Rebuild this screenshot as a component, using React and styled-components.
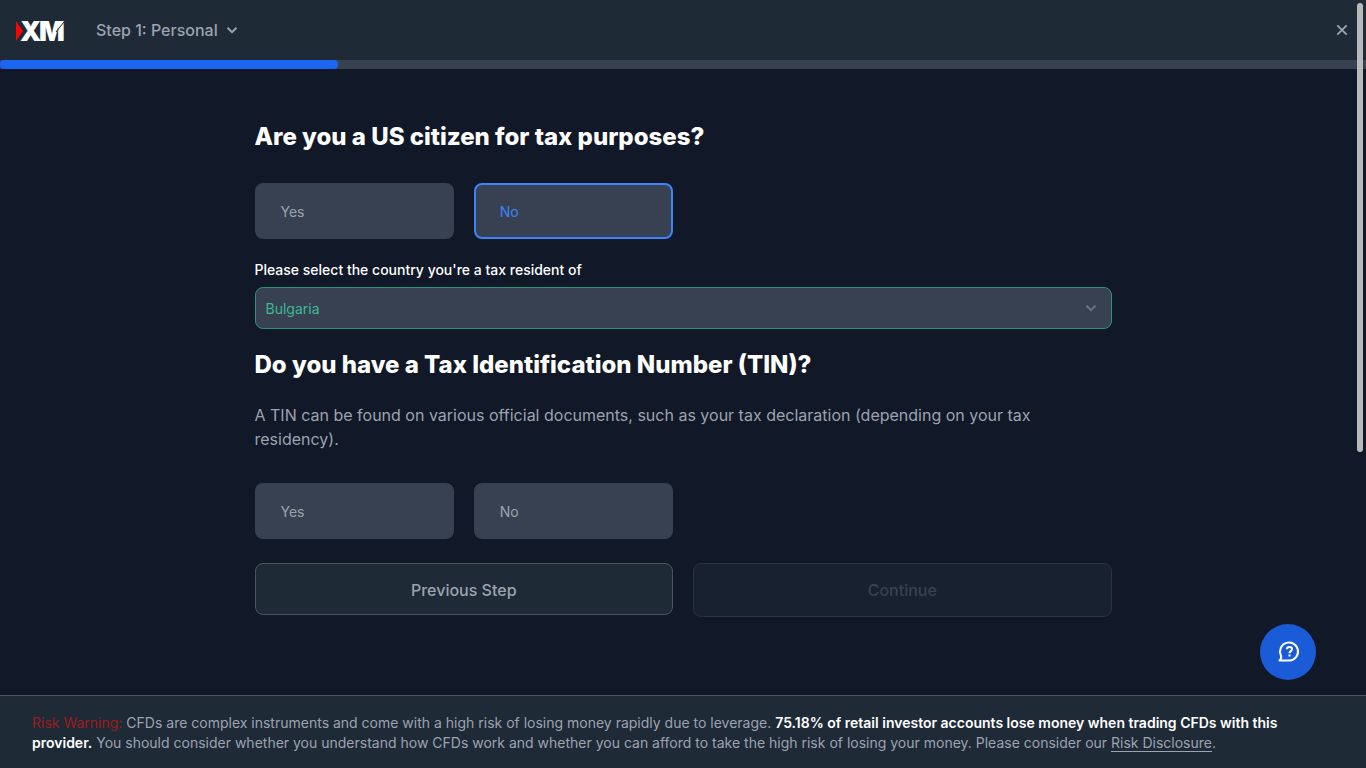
import { useState } from 'react';
import styled, { createGlobalStyle } from 'styled-components';

const GlobalStyle = createGlobalStyle`
  *,
  *::before,
  *::after {
    box-sizing: border-box;
  }

  body {
    margin: 0;
    background: #111827;
    color: #9ca3af;
    font-family: Inter, 'Liberation Sans', sans-serif;
    font-size: 16px;
    line-height: 24px;
  }

  button,
  select {
    font-family: inherit;
  }
`;

const Page = styled.div`
  display: flex;
  flex-direction: column;
  min-height: 100vh;
`;

const Header = styled.header`
  display: flex;
  align-items: center;
  gap: 32px;
  height: 60px;
  padding: 0 16px;
  background: #1f2a37;
`;

const LogoLink = styled.a`
  display: flex;
`;

const LogoSvg = styled.svg`
  display: block;
  overflow: visible;
`;

const LogoText = styled.text`
  fill: #fff;
  font-family: Inter, 'Liberation Sans', sans-serif;
  font-size: 27px;
  font-weight: 900;
`;

const StepButton = styled.button`
  display: flex;
  align-items: center;
  gap: 8px;
  padding: 0;
  border: 0;
  background: none;
  color: #9ca3af;
  font-size: 16px;
  font-weight: 500;
  line-height: 24px;
  cursor: pointer;
`;

const CloseButton = styled.button`
  display: flex;
  margin-left: auto;
  padding: 2px;
  border: 0;
  background: none;
  color: #9ca3af;
  cursor: pointer;
`;

const ProgressTrack = styled.div`
  height: 9px;
  padding-right: 14px;
  background: #374151;
`;

const ProgressBar = styled.div`
  height: 100%;
  border-radius: 4px;
  background: #1c64f2;
`;

const Main = styled.main`
  flex: 1;
  width: 100%;
  max-width: 889px;
  margin: 0 auto;
  padding: 52px 16px 32px;
`;

const Title = styled.h2`
  margin: 0;
  color: #fff;
  font-size: 24px;
  font-weight: 800;
  line-height: 32px;
`;

const Hint = styled.p`
  margin: 22px 0 0;
`;

const Options = styled.div`
  display: grid;
  grid-template-columns: repeat(4, 1fr);
  gap: 20px;
  margin-top: ${({ $top }) => $top}px;
`;

const HiddenRadio = styled.input`
  position: absolute;
  opacity: 0;
`;

const Option = styled.label`
  display: flex;
  align-items: center;
  height: 56px;
  padding: 2px 24px 0;
  border: 2px solid ${({ $checked }) => ($checked ? '#3f83f8' : '#374151')};
  border-radius: 8px;
  background: #374151;
  color: ${({ $checked }) => ($checked ? '#3f83f8' : '#9ca3af')};
  font-size: 14px;
  line-height: 20px;
  cursor: pointer;
`;

const FieldLabel = styled.label`
  display: block;
  margin: 21px 0 7px;
  color: #fff;
  font-size: 14px;
  font-weight: 500;
  line-height: 20px;
`;

const SelectBox = styled.div`
  position: relative;
  margin-bottom: 20px;
`;

const Select = styled.select`
  display: block;
  width: 100%;
  height: 42px;
  padding: 2px 40px 0 10px;
  border: 1px solid #2a9477;
  border-radius: 8px;
  background: #374151;
  color: #3cba92;
  font-size: 14px;
  line-height: 20px;
  appearance: none;
`;

const SelectArrow = styled.span`
  position: absolute;
  top: 0;
  right: 15px;
  display: flex;
  align-items: center;
  height: 100%;
  color: #6b7280;
  pointer-events: none;
`;

const Actions = styled.div`
  display: grid;
  grid-template-columns: 1fr 1fr;
  align-items: start;
  gap: 20px;
  margin-top: 24px;
`;

const ActionButton = styled.button`
  height: ${({ $height }) => $height}px;
  padding: ${({ $height }) => ($height === 52 ? '2px 20px 0' : '0 20px')};
  border: 1px solid #4b5563;
  border-radius: 8px;
  background: #1f2a37;
  color: #9ca3af;
  font-size: 16px;
  font-weight: 500;
  line-height: 24px;
  cursor: pointer;

  &:disabled {
    border-color: #29333f;
    background: #18212f;
    color: #374151;
    cursor: not-allowed;
  }
`;

const Footer = styled.footer`
  padding: 17px 32px 15px;
  border-top: 1px solid #4b5563;
  background: #1f2a37;
  font-size: 14px;
  line-height: 20px;
`;

const FooterText = styled.p`
  margin: 0;
`;

const Warning = styled.span`
  color: #9b1c1c;
`;

const Strong = styled.strong`
  color: #fff;
  font-weight: 600;
`;

const FooterLink = styled.a`
  color: inherit;
  text-decoration: none;
  border-bottom: 1px solid #9ca3af;
`;

const HelpButton = styled.button`
  position: fixed;
  right: 50px;
  bottom: 88px;
  display: flex;
  align-items: center;
  justify-content: center;
  width: 56px;
  height: 56px;
  padding: 0;
  border: 0;
  border-radius: 50%;
  background: #1a5cd8;
  color: #fff;
  cursor: pointer;
`;

const ScrollThumb = styled.div`
  position: fixed;
  top: 3px;
  right: 3px;
  width: 6px;
  height: 449px;
  border-radius: 3px;
  background: #b9b9b9;
`;

function Logo() {
  return (
    <LogoSvg width="48" height="22" viewBox="0 0 48 22" role="img" aria-label="XM">
      <LogoText x="4" y="22">X</LogoText>
      <LogoText x="23" y="22">M</LogoText>
      <path d="M0 2L7 12L0 22Z" fill="#f00" />
      <path d="M48 3L40 13" stroke="#1f2a37" strokeWidth="1" fill="none" />
    </LogoSvg>
  );
}

function Chevron() {
  return (
    <svg width="12" height="12" viewBox="0 0 12 12" fill="none" aria-hidden="true">
      <path d="M1.5 3.8L6 8.2L10.5 3.8" stroke="currentColor" strokeWidth="2" />
    </svg>
  );
}

function CloseIcon() {
  return (
    <svg width="12" height="12" viewBox="0 0 12 12" fill="none" aria-hidden="true">
      <path d="M1.3 1.3L10.7 10.7M10.7 1.3L1.3 10.7" stroke="currentColor" strokeWidth="1.8" />
    </svg>
  );
}

function HelpIcon() {
  return (
    <svg width="24" height="24" viewBox="-1 0 24 24" fill="none" stroke="currentColor" strokeWidth="2" aria-hidden="true">
      <path d="M2.5 20.5C4.6 18.4 4.5 16.8 3.8 15.2A9 9 0 1 1 12.5 20.5Z" strokeLinejoin="round" />
      <path d="M10 9.3C10 7.9 11.1 7.1 12.5 7.1C13.9 7.1 15 8 15 9.3C15 11.2 12.5 11.1 12.5 13.2M12.5 14.6V16.6" />
    </svg>
  );
}

function YesNo({ name, label, value, onChange, top }) {
  return (
    <Options role="radiogroup" aria-label={label} $top={top}>
      {['Yes', 'No'].map((option) => (
        <Option key={option} $checked={value === option}>
          <HiddenRadio
            type="radio"
            name={name}
            value={option}
            checked={value === option}
            onChange={() => onChange(option)}
          />
          {option}
        </Option>
      ))}
    </Options>
  );
}

export default function App() {
  const [citizen, setCitizen] = useState('No');
  const [hasTin, setHasTin] = useState('');
  const progress = 25;

  return (
    <>
      <GlobalStyle />
      <Page>
        <Header>
          <LogoLink href="#">
            <Logo />
          </LogoLink>
          <StepButton type="button">
            Step 1: Personal
            <Chevron />
          </StepButton>
          <CloseButton type="button" aria-label="Close">
            <CloseIcon />
          </CloseButton>
        </Header>
        <ProgressTrack>
          <ProgressBar role="progressbar" aria-valuenow={progress} style={{ width: `${progress}%` }} />
        </ProgressTrack>

        <Main>
          <Title>Are you a US citizen for tax purposes?</Title>
          <YesNo name="citizen" label="US citizen" value={citizen} onChange={setCitizen} top={30} />

          <FieldLabel htmlFor="country">Please select the country you're a tax resident of</FieldLabel>
          <SelectBox>
            <Select id="country" defaultValue="Bulgaria">
              <option>Bulgaria</option>
            </Select>
            <SelectArrow>
              <Chevron />
            </SelectArrow>
          </SelectBox>

          <Title>Do you have a Tax Identification Number (TIN)?</Title>
          <Hint>
            A TIN can be found on various official documents, such as your tax declaration (depending on your tax
            residency).
          </Hint>
          <YesNo name="tin" label="TIN" value={hasTin} onChange={setHasTin} top={32} />

          <Actions>
            <ActionButton type="button" $height={52}>Previous Step</ActionButton>
            <ActionButton type="button" $height={54} disabled={!hasTin}>Continue</ActionButton>
          </Actions>
        </Main>

        <Footer>
          <FooterText>
            <Warning>Risk Warning:</Warning> CFDs are complex instruments and come with a high risk of losing money
            rapidly due to leverage.{' '}
            <Strong>75.18% of retail investor accounts lose money when trading CFDs with this provider.</Strong> You
            should consider whether you understand how CFDs work and whether you can afford to take the high risk of
            losing your money. Please consider our <FooterLink href="#">Risk Disclosure</FooterLink>.
          </FooterText>
        </Footer>
      </Page>

      <HelpButton type="button" aria-label="Help">
        <HelpIcon />
      </HelpButton>
      <ScrollThumb aria-hidden="true" />
    </>
  );
}
